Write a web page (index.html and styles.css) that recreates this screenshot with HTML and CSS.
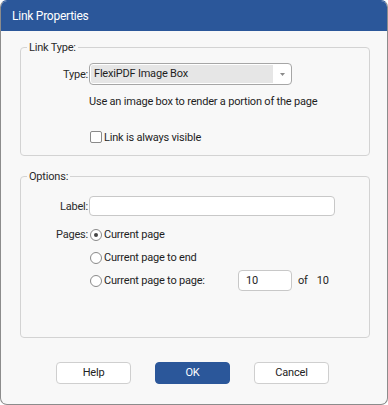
FILE: index.html
```html
<!DOCTYPE html>
<html>
<head>
<meta charset="utf-8">
<link rel="stylesheet" href="styles.css">
</head>
<body>
<div class="window">
  <div class="titlebar">Link Properties</div>
  <div class="content">
    <fieldset class="group group-type">
      <legend>Link Type:</legend>
      <div class="row row-select">
        <span class="lbl">Type:</span>
        <div class="select">
          <span class="sel-value">FlexiPDF Image Box</span>
          <span class="sel-btn"><svg width="5" height="3" viewBox="0 0 5 3"><path d="M0 0H5L2.5 3Z" fill="#8a8a8a"/></svg></span>
        </div>
      </div>
      <div class="row row-desc">
        <span class="lbl"></span>
        <span class="desc">Use an image box to render a portion of the page</span>
      </div>
      <div class="row row-check">
        <span class="lbl"></span>
        <span class="opt"><span class="checkbox"></span><span>Link is always visible</span></span>
      </div>
    </fieldset>

    <fieldset class="group group-options">
      <legend>Options:</legend>
      <div class="row row-label">
        <span class="lbl">Label:</span>
        <span class="input input-label"></span>
      </div>
      <div class="row row-radio first">
        <span class="lbl">Pages:</span>
        <span class="opt"><span class="radio checked"></span><span>Current page</span></span>
      </div>
      <div class="row row-radio">
        <span class="lbl"></span>
        <span class="opt"><span class="radio"></span><span>Current page to end</span></span>
      </div>
      <div class="row row-radio">
        <span class="lbl"></span>
        <span class="opt"><span class="radio"></span><span class="opt-text-wide">Current page to page:</span><span class="input input-page">10</span><span class="of">of</span><span class="total">10</span></span>
      </div>
    </fieldset>

    <div class="buttons">
      <span class="btn">Help</span>
      <span class="btn primary">OK</span>
      <span class="btn">Cancel</span>
    </div>
  </div>
</div>
</body>
</html>
```
FILE: styles.css
```css
html, body {
  margin: 0;
  padding: 0;
  background: #ffffff;
}
body {
  font-family: Roboto, "Liberation Sans", Arial, sans-serif;
  font-size: 11px;
  letter-spacing: -0.2px;
  color: #1e1e1e;
}
.window {
  width: 388px;
  height: 405px;
  box-sizing: border-box;
  border: 1px solid #8c8c8c;
  border-top-color: #2b579a;
  border-radius: 7px;
  background: #f8f8f8;
  overflow: hidden;
  display: flex;
  flex-direction: column;
}
.titlebar {
  height: 30px;
  background: #2b579a;
  color: #ffffff;
  font-size: 12px;
  letter-spacing: -0.25px;
  line-height: 30px;
  padding-left: 11px;
  flex: none;
}
.content {
  padding: 9px 0 0 19px;
}
.group {
  width: 350px;
  box-sizing: border-box;
  margin: 0;
  border: 1px solid #d3d3d3;
  border-radius: 4px;
  padding: 8px 0 10px 0;
  min-width: 0;
}
.group legend {
  padding: 0 2px;
  margin-left: 6px;
  line-height: 15px;
  color: #2a2a2a;
}
.group-options {
  margin-top: 13px;
  padding-top: 12px;
  padding-bottom: 45px;
}
.row {
  display: grid;
  grid-template-columns: 67px auto;
  column-gap: 1px;
  align-items: center;
  justify-items: start;
}
.lbl {
  justify-self: end;
  color: #2a2a2a;
}
.row-select {
  height: 22px;
}
.select {
  width: 203px;
  height: 22px;
  box-sizing: border-box;
  border: 1px solid #a6a6a6;
  border-radius: 4px;
  background: #ffffff;
  display: flex;
  overflow: hidden;
}
.sel-value {
  flex: 1;
  background: #e6e6e6;
  margin: 1px 0 1px 1px;
  border-radius: 2px 0 0 2px;
  line-height: 18px;
  padding-left: 3px;
  color: #1f1f1f;
}
.sel-btn {
  width: 18px;
  display: flex;
  align-items: center;
  justify-content: center;
}
.row-desc {
  margin-top: 8px;
  height: 16px;
}
.row-check {
  margin-top: 20px;
  height: 16px;
}
.opt {
  display: flex;
  align-items: center;
  gap: 2px;
}
.checkbox {
  width: 10px;
  height: 10px;
  border: 1px solid #8a8a8a;
  border-radius: 2px;
  background: #ffffff;
  margin-left: 1px;
  flex: none;
}
.radio {
  width: 10px;
  height: 10px;
  border: 1px solid #8a8a8a;
  border-radius: 50%;
  background: #ffffff;
  margin-left: 1px;
  flex: none;
  display: flex;
  align-items: center;
  justify-content: center;
}
.radio.checked::after {
  content: "";
  width: 4px;
  height: 4px;
  border-radius: 50%;
  background: #454545;
}
.input {
  box-sizing: border-box;
  border: 1px solid #c8c8c8;
  border-radius: 4px;
  background: #ffffff;
  display: block;
}
.row-label {
  height: 20px;
}
.input-label {
  width: 246px;
  height: 20px;
}
.row-radio {
  height: 23px;
}
.row-radio.first {
  margin-top: 7px;
}
.opt-text-wide {
  width: 132px;
}
.input-page {
  width: 54px;
  height: 21px;
  line-height: 19px;
  padding-left: 7px;
}
.of {
  margin-left: 4px;
}
.total {
  margin-left: 7px;
}
.buttons {
  display: flex;
  gap: 24px;
  margin-top: 24px;
  padding-left: 36px;
}
.btn {
  width: 75px;
  height: 22px;
  box-sizing: border-box;
  border: 1px solid #cfcfcf;
  border-radius: 4px;
  background: #ffffff;
  text-align: center;
  line-height: 20px;
  color: #222222;
}
.btn.primary {
  background: #2b579a;
  border-color: #2b579a;
  color: #ffffff;
}
```
